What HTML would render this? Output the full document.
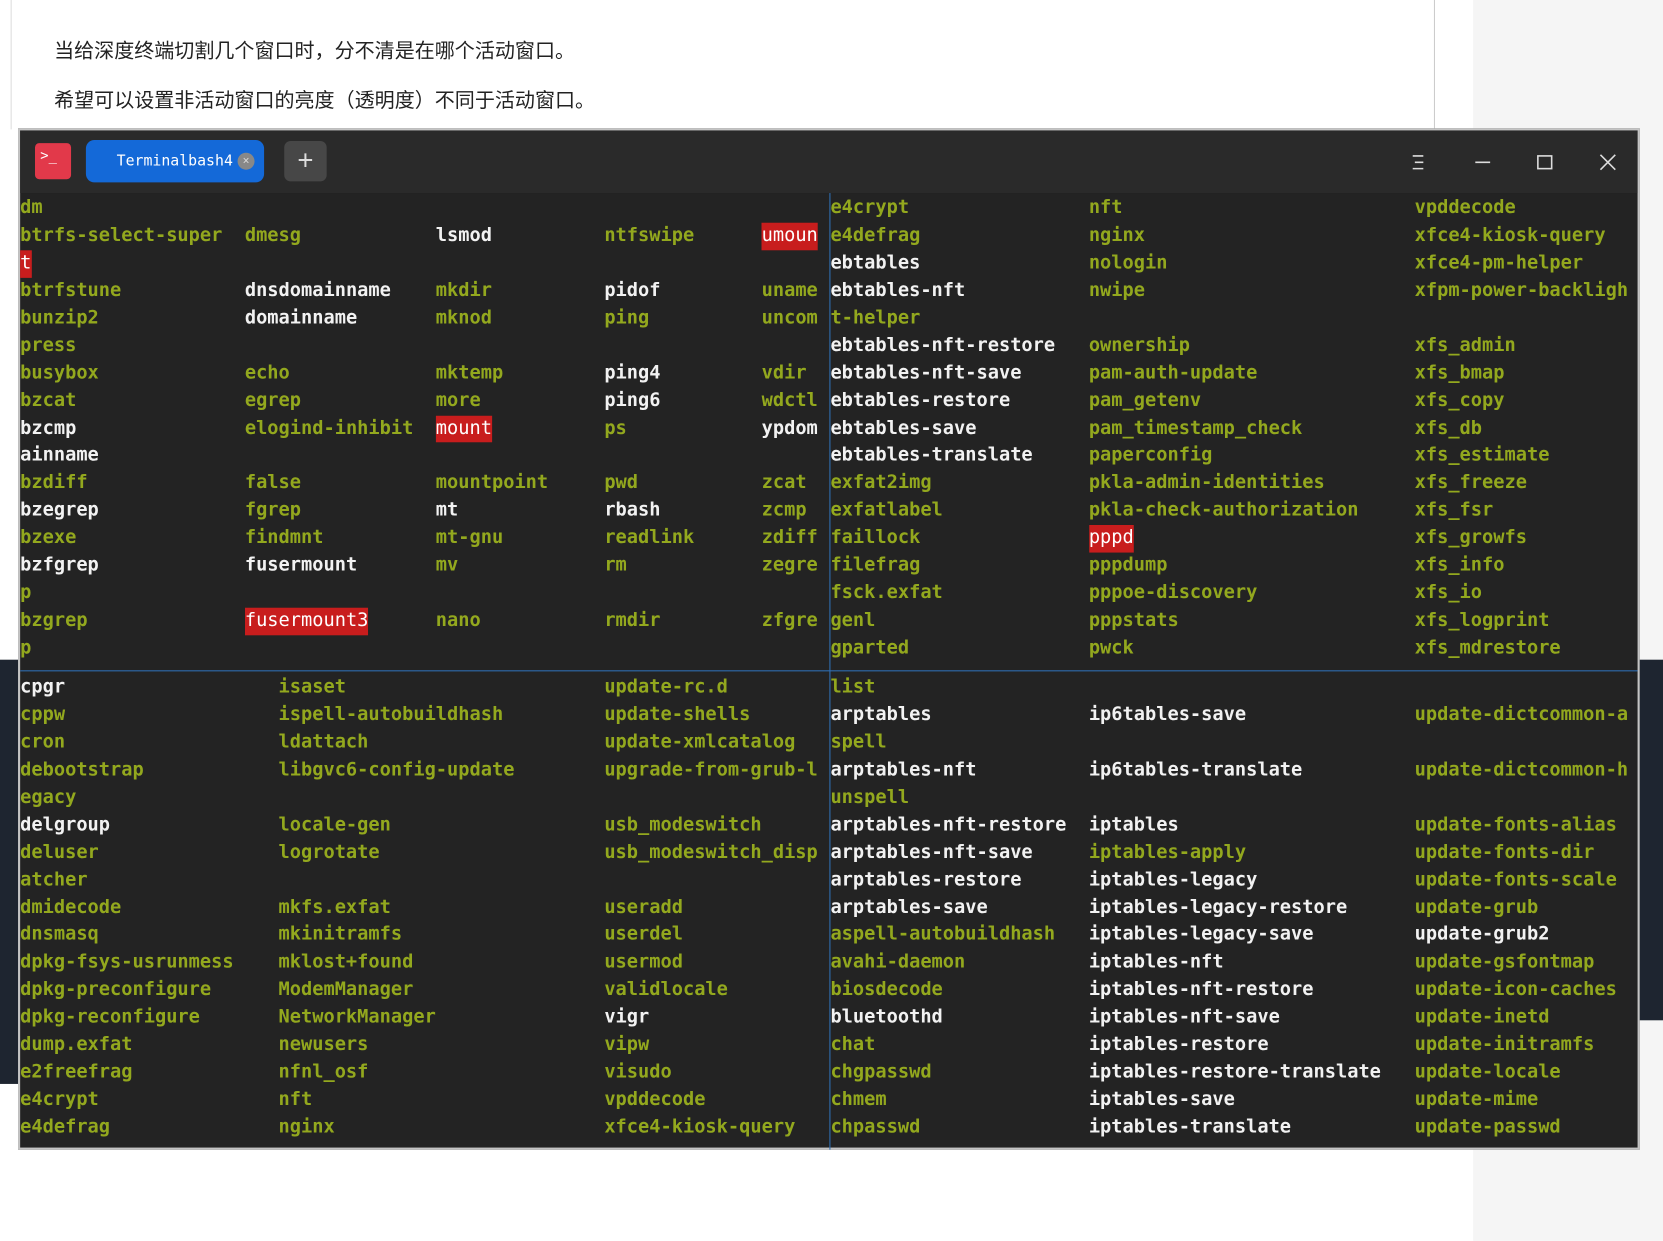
<!DOCTYPE html>
<html><head><meta charset="utf-8"><style>
*{margin:0;padding:0;box-sizing:border-box}
body{width:1663px;height:1170px;background:#fff;position:relative;overflow:hidden;font-family:"Liberation Sans","Noto Sans CJK SC",sans-serif}
#w{position:absolute;left:0;top:0;width:1568px;height:1104px;transform:scale(1.0606);transform-origin:0 0}
.abs{position:absolute}
.p{position:absolute;left:51px;font-size:18.9px;color:#222}
.term{position:absolute;left:17px;top:121px;width:1529px;height:963px;border:2px solid #c4c4c4;background:#232323}
.tb{position:absolute;left:0;top:0;right:0;height:59px;background:#2a2a2a}
.pane{position:absolute;font-family:"DejaVu Sans Mono","Liberation Mono",monospace;font-weight:bold;font-size:17.6px}
.r{position:relative;height:25.94px;line-height:25.94px}
.r b{position:absolute;top:0;white-space:pre}
.g{color:#93a81e}.w{color:#f2f2f2}.x{color:#fff;background:#c81d1d;font-weight:normal}
</style></head><body><div id="w">
<div class="abs" style="left:10px;top:0;width:1px;height:122px;background:#ddd"></div>
<div class="abs" style="left:1352px;top:0;width:1px;height:122px;background:#ccc"></div>
<div class="abs" style="left:1389px;top:0;width:274px;height:1170px;background:#f5f5f5"></div>
<div class="abs" style="left:0;top:622px;width:20px;height:400px;background:#1e2530"></div>
<div class="abs" style="left:1540px;top:622px;width:123px;height:340px;background:#1e2530"></div>
<div class="p" style="top:33px">当给深度终端切割几个窗口时，分不清是在哪个活动窗口。</div>
<div class="p" style="top:80px">希望可以设置非活动窗口的亮度（透明度）不同于活动窗口。</div>
<div class="term">
<div class="tb">
<div class="abs" style="left:14px;top:12px;width:34px;height:34px;background:#e2394a;border-radius:4px;color:#fff;font:13px 'DejaVu Sans Mono',monospace;padding:5px 0 0 5px">&gt;_</div>
<div class="abs" style="left:62px;top:9px;width:168px;height:40px;background:#1469d8;border-radius:8px;color:#fff;font:14px 'DejaVu Sans Mono',monospace;line-height:40px;padding-left:29px">Terminalbash4</div>
<div class="abs" style="left:205px;top:21px;width:16px;height:16px;border-radius:50%;background:#888;color:#ddd;font:11px sans-serif;text-align:center;line-height:16px">×</div>
<div class="abs" style="left:249px;top:10px;width:40px;height:38px;background:#474747;border-radius:6px;color:#ddd;font:26px sans-serif;text-align:center;line-height:36px">+</div>
<svg class="abs" style="left:1300px;top:18px" width="220" height="24" viewBox="0 0 220 24" fill="none" stroke="#ddd" stroke-width="1.5">
<path d="M13 6h10M15 12h8M13 18h10"/><path d="M72 12h14"/><rect x="131" y="6" width="13" height="12"/><path d="M190 5l14 14M204 5l-14 14"/></svg>
</div>
<div class="abs" style="left:763px;top:59px;width:1px;height:902px;background:#2f6fb5"></div>
<div class="abs" style="left:0;top:509px;width:1525px;height:1px;background:#2f6fb5"></div>

<div class="pane" style="left:0;top:61px;width:763px">
<div class="r"><b class="g">dm</b></div>
<div class="r"><b class="g">btrfs-select-super</b><b class="g" style="left:20ch">dmesg</b><b class="w" style="left:37ch">lsmod</b><b class="g" style="left:52ch">ntfswipe</b><b class="x" style="left:66ch">umoun</b></div>
<div class="r"><b class="x">t</b></div>
<div class="r"><b class="g">btrfstune</b><b class="w" style="left:20ch">dnsdomainname</b><b class="g" style="left:37ch">mkdir</b><b class="w" style="left:52ch">pidof</b><b class="g" style="left:66ch">uname</b></div>
<div class="r"><b class="g">bunzip2</b><b class="w" style="left:20ch">domainname</b><b class="g" style="left:37ch">mknod</b><b class="g" style="left:52ch">ping</b><b class="g" style="left:66ch">uncom</b></div>
<div class="r"><b class="g">press</b></div>
<div class="r"><b class="g">busybox</b><b class="g" style="left:20ch">echo</b><b class="g" style="left:37ch">mktemp</b><b class="w" style="left:52ch">ping4</b><b class="g" style="left:66ch">vdir</b></div>
<div class="r"><b class="g">bzcat</b><b class="g" style="left:20ch">egrep</b><b class="g" style="left:37ch">more</b><b class="w" style="left:52ch">ping6</b><b class="g" style="left:66ch">wdctl</b></div>
<div class="r"><b class="w">bzcmp</b><b class="g" style="left:20ch">elogind-inhibit</b><b class="x" style="left:37ch">mount</b><b class="g" style="left:52ch">ps</b><b class="w" style="left:66ch">ypdom</b></div>
<div class="r"><b class="w">ainname</b></div>
<div class="r"><b class="g">bzdiff</b><b class="g" style="left:20ch">false</b><b class="g" style="left:37ch">mountpoint</b><b class="g" style="left:52ch">pwd</b><b class="g" style="left:66ch">zcat</b></div>
<div class="r"><b class="w">bzegrep</b><b class="g" style="left:20ch">fgrep</b><b class="w" style="left:37ch">mt</b><b class="w" style="left:52ch">rbash</b><b class="g" style="left:66ch">zcmp</b></div>
<div class="r"><b class="g">bzexe</b><b class="g" style="left:20ch">findmnt</b><b class="g" style="left:37ch">mt-gnu</b><b class="g" style="left:52ch">readlink</b><b class="g" style="left:66ch">zdiff</b></div>
<div class="r"><b class="w">bzfgrep</b><b class="w" style="left:20ch">fusermount</b><b class="g" style="left:37ch">mv</b><b class="g" style="left:52ch">rm</b><b class="g" style="left:66ch">zegre</b></div>
<div class="r"><b class="g">p</b></div>
<div class="r"><b class="g">bzgrep</b><b class="x" style="left:20ch">fusermount3</b><b class="g" style="left:37ch">nano</b><b class="g" style="left:52ch">rmdir</b><b class="g" style="left:66ch">zfgre</b></div>
<div class="r"><b class="g">p</b></div>
</div>

<div class="pane" style="left:764px;top:61px;width:761px">
<div class="r"><b class="g">e4crypt</b><b class="g" style="left:23ch">nft</b><b class="g" style="left:52ch">vpddecode</b></div>
<div class="r"><b class="g">e4defrag</b><b class="g" style="left:23ch">nginx</b><b class="g" style="left:52ch">xfce4-kiosk-query</b></div>
<div class="r"><b class="w">ebtables</b><b class="g" style="left:23ch">nologin</b><b class="g" style="left:52ch">xfce4-pm-helper</b></div>
<div class="r"><b class="w">ebtables-nft</b><b class="g" style="left:23ch">nwipe</b><b class="g" style="left:52ch">xfpm-power-backligh</b></div>
<div class="r"><b class="g">t-helper</b></div>
<div class="r"><b class="w">ebtables-nft-restore</b><b class="g" style="left:23ch">ownership</b><b class="g" style="left:52ch">xfs_admin</b></div>
<div class="r"><b class="w">ebtables-nft-save</b><b class="g" style="left:23ch">pam-auth-update</b><b class="g" style="left:52ch">xfs_bmap</b></div>
<div class="r"><b class="w">ebtables-restore</b><b class="g" style="left:23ch">pam_getenv</b><b class="g" style="left:52ch">xfs_copy</b></div>
<div class="r"><b class="w">ebtables-save</b><b class="g" style="left:23ch">pam_timestamp_check</b><b class="g" style="left:52ch">xfs_db</b></div>
<div class="r"><b class="w">ebtables-translate</b><b class="g" style="left:23ch">paperconfig</b><b class="g" style="left:52ch">xfs_estimate</b></div>
<div class="r"><b class="g">exfat2img</b><b class="g" style="left:23ch">pkla-admin-identities</b><b class="g" style="left:52ch">xfs_freeze</b></div>
<div class="r"><b class="g">exfatlabel</b><b class="g" style="left:23ch">pkla-check-authorization</b><b class="g" style="left:52ch">xfs_fsr</b></div>
<div class="r"><b class="g">faillock</b><b class="x" style="left:23ch">pppd</b><b class="g" style="left:52ch">xfs_growfs</b></div>
<div class="r"><b class="g">filefrag</b><b class="g" style="left:23ch">pppdump</b><b class="g" style="left:52ch">xfs_info</b></div>
<div class="r"><b class="g">fsck.exfat</b><b class="g" style="left:23ch">pppoe-discovery</b><b class="g" style="left:52ch">xfs_io</b></div>
<div class="r"><b class="g">genl</b><b class="g" style="left:23ch">pppstats</b><b class="g" style="left:52ch">xfs_logprint</b></div>
<div class="r"><b class="g">gparted</b><b class="g" style="left:23ch">pwck</b><b class="g" style="left:52ch">xfs_mdrestore</b></div>
</div>

<div class="pane" style="left:0;top:513px;width:763px">
<div class="r"><b class="w">cpgr</b><b class="g" style="left:23ch">isaset</b><b class="g" style="left:52ch">update-rc.d</b></div>
<div class="r"><b class="g">cppw</b><b class="g" style="left:23ch">ispell-autobuildhash</b><b class="g" style="left:52ch">update-shells</b></div>
<div class="r"><b class="g">cron</b><b class="g" style="left:23ch">ldattach</b><b class="g" style="left:52ch">update-xmlcatalog</b></div>
<div class="r"><b class="g">debootstrap</b><b class="g" style="left:23ch">libgvc6-config-update</b><b class="g" style="left:52ch">upgrade-from-grub-l</b></div>
<div class="r"><b class="g">egacy</b></div>
<div class="r"><b class="w">delgroup</b><b class="g" style="left:23ch">locale-gen</b><b class="g" style="left:52ch">usb_modeswitch</b></div>
<div class="r"><b class="g">deluser</b><b class="g" style="left:23ch">logrotate</b><b class="g" style="left:52ch">usb_modeswitch_disp</b></div>
<div class="r"><b class="g">atcher</b></div>
<div class="r"><b class="g">dmidecode</b><b class="g" style="left:23ch">mkfs.exfat</b><b class="g" style="left:52ch">useradd</b></div>
<div class="r"><b class="g">dnsmasq</b><b class="g" style="left:23ch">mkinitramfs</b><b class="g" style="left:52ch">userdel</b></div>
<div class="r"><b class="g">dpkg-fsys-usrunmess</b><b class="g" style="left:23ch">mklost+found</b><b class="g" style="left:52ch">usermod</b></div>
<div class="r"><b class="g">dpkg-preconfigure</b><b class="g" style="left:23ch">ModemManager</b><b class="g" style="left:52ch">validlocale</b></div>
<div class="r"><b class="g">dpkg-reconfigure</b><b class="g" style="left:23ch">NetworkManager</b><b class="w" style="left:52ch">vigr</b></div>
<div class="r"><b class="g">dump.exfat</b><b class="g" style="left:23ch">newusers</b><b class="g" style="left:52ch">vipw</b></div>
<div class="r"><b class="g">e2freefrag</b><b class="g" style="left:23ch">nfnl_osf</b><b class="g" style="left:52ch">visudo</b></div>
<div class="r"><b class="g">e4crypt</b><b class="g" style="left:23ch">nft</b><b class="g" style="left:52ch">vpddecode</b></div>
<div class="r"><b class="g">e4defrag</b><b class="g" style="left:23ch">nginx</b><b class="g" style="left:52ch">xfce4-kiosk-query</b></div>
</div>

<div class="pane" style="left:764px;top:513px;width:761px">
<div class="r"><b class="g">list</b></div>
<div class="r"><b class="w">arptables</b><b class="w" style="left:23ch">ip6tables-save</b><b class="g" style="left:52ch">update-dictcommon-a</b></div>
<div class="r"><b class="g">spell</b></div>
<div class="r"><b class="w">arptables-nft</b><b class="w" style="left:23ch">ip6tables-translate</b><b class="g" style="left:52ch">update-dictcommon-h</b></div>
<div class="r"><b class="g">unspell</b></div>
<div class="r"><b class="w">arptables-nft-restore</b><b class="w" style="left:23ch">iptables</b><b class="g" style="left:52ch">update-fonts-alias</b></div>
<div class="r"><b class="w">arptables-nft-save</b><b class="g" style="left:23ch">iptables-apply</b><b class="g" style="left:52ch">update-fonts-dir</b></div>
<div class="r"><b class="w">arptables-restore</b><b class="w" style="left:23ch">iptables-legacy</b><b class="g" style="left:52ch">update-fonts-scale</b></div>
<div class="r"><b class="w">arptables-save</b><b class="w" style="left:23ch">iptables-legacy-restore</b><b class="g" style="left:52ch">update-grub</b></div>
<div class="r"><b class="g">aspell-autobuildhash</b><b class="w" style="left:23ch">iptables-legacy-save</b><b class="w" style="left:52ch">update-grub2</b></div>
<div class="r"><b class="g">avahi-daemon</b><b class="w" style="left:23ch">iptables-nft</b><b class="g" style="left:52ch">update-gsfontmap</b></div>
<div class="r"><b class="g">biosdecode</b><b class="w" style="left:23ch">iptables-nft-restore</b><b class="g" style="left:52ch">update-icon-caches</b></div>
<div class="r"><b class="w">bluetoothd</b><b class="w" style="left:23ch">iptables-nft-save</b><b class="g" style="left:52ch">update-inetd</b></div>
<div class="r"><b class="g">chat</b><b class="w" style="left:23ch">iptables-restore</b><b class="g" style="left:52ch">update-initramfs</b></div>
<div class="r"><b class="g">chgpasswd</b><b class="w" style="left:23ch">iptables-restore-translate</b><b class="g" style="left:52ch">update-locale</b></div>
<div class="r"><b class="g">chmem</b><b class="w" style="left:23ch">iptables-save</b><b class="g" style="left:52ch">update-mime</b></div>
<div class="r"><b class="g">chpasswd</b><b class="w" style="left:23ch">iptables-translate</b><b class="g" style="left:52ch">update-passwd</b></div>
</div>
</div>
</div></body></html>
